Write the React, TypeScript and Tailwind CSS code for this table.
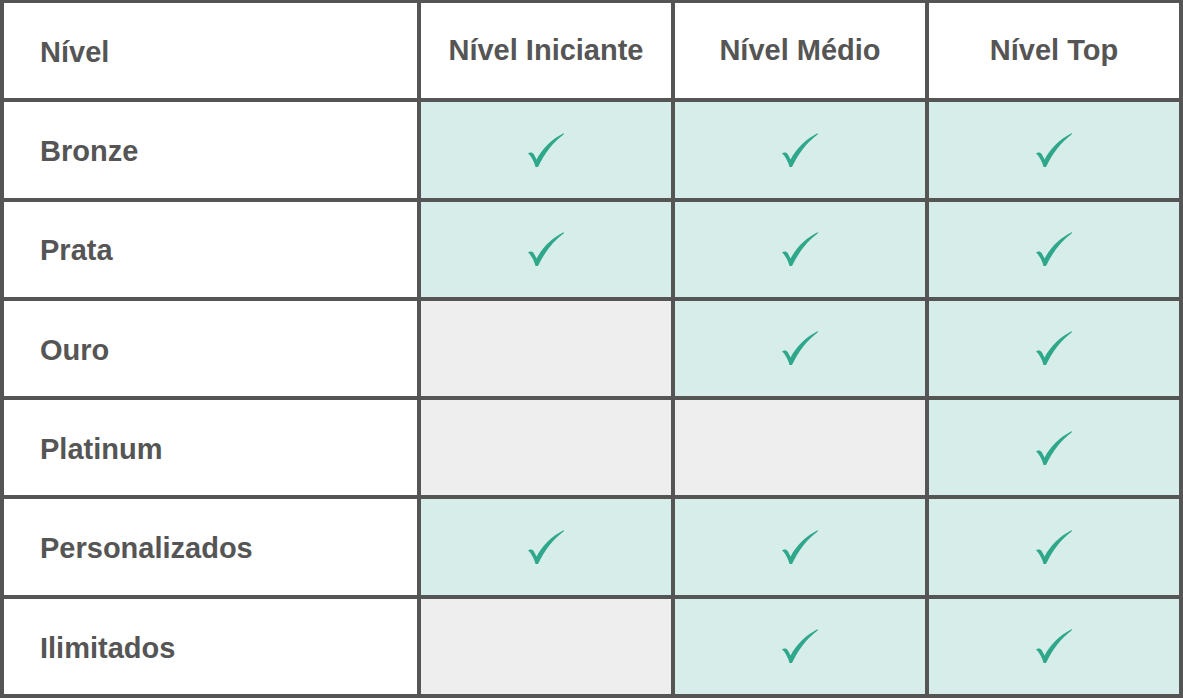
const cols = ['Nível Iniciante', 'Nível Médio', 'Nível Top']

const rows: { label: string; checks: boolean[] }[] = [
  { label: 'Bronze', checks: [true, true, true] },
  { label: 'Prata', checks: [true, true, true] },
  { label: 'Ouro', checks: [false, true, true] },
  { label: 'Platinum', checks: [false, false, true] },
  { label: 'Personalizados', checks: [true, true, true] },
  { label: 'Ilimitados', checks: [false, true, true] },
]

function Check() {
  return (
    <svg viewBox="0 0 36 34" className="w-[36px] h-[34px]" fill="#2ea78b">
      <path d="M0 20.3 C2.2 18.8 4.6 19.2 5.8 21.2 L8.6 26.6 C14.5 15 24 6 36 0 L35.6 1.4 C25.5 8.6 16.8 20 10 34 L7.6 34.2 C6.2 29 3.6 23.6 0 20.3 Z" />
    </svg>
  )
}

export default function App() {
  return (
    <div className="w-[1183px] h-[698px] bg-[#555555] pt-[3px] pb-[4px] px-[4px] grid grid-cols-[413px_250px_250px_250px] grid-rows-7 gap-[4px] font-['Liberation_Sans',Arial,sans-serif] font-bold text-[#555555] text-[29px] overflow-hidden">
      <div className="bg-white flex items-center pl-9 pt-1">Nível</div>
      {cols.map((c) => (
        <div key={c} className="bg-white flex items-center justify-center">
          {c}
        </div>
      ))}

      {rows.map((r) => (
        <div key={r.label} className="contents">
          <div className="bg-white flex items-center pl-9 pt-1">{r.label}</div>
          {r.checks.map((on, i) => (
            <div
              key={i}
              className={`flex items-center justify-center ${on ? 'bg-[#d7ede9]' : 'bg-[#eeeeee]'}`}
            >
              {on && <Check />}
            </div>
          ))}
        </div>
      ))}
    </div>
  )
}
